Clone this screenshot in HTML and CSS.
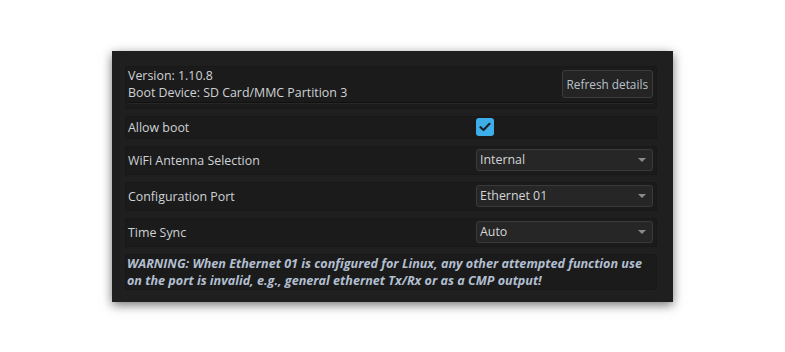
FILE: index.html
```html
<!DOCTYPE html>
<html lang="en">
<head>
    <meta charset="UTF-8">
    <meta name="viewport" content="width=device-width, initial-scale=1.0">
    <title>Device Settings</title>
    <link rel="stylesheet" href="styles.css">
</head>
<body>
    <div class="panel">
        <!-- Version / boot device -->
        <div class="row info-row">
            <div class="info-top">
                <div class="info-text">
                    <div>Version: 1.10.8</div>
                    <div>Boot Device: SD Card/MMC Partition 3</div>
                </div>
                <button class="button">Refresh details</button>
            </div>
            <div class="info-bar"></div>
        </div>

        <div class="row check-row">
            <span class="label">Allow boot</span>
            <span class="checkbox">
                <svg width="12" height="10" viewBox="0 0 12 10">
                    <path d="M1.5 5.2 L4.5 8 L10.5 1.8" fill="none" stroke="#1d2125" stroke-width="2.2" stroke-linecap="round" stroke-linejoin="round"/>
                </svg>
            </span>
        </div>

        <div class="row">
            <span class="label">WiFi Antenna Selection</span>
            <div class="select">Internal<span class="arrow"></span></div>
        </div>

        <div class="row">
            <span class="label">Configuration Port</span>
            <div class="select">Ethernet 01<span class="arrow"></span></div>
        </div>

        <div class="row">
            <span class="label">Time Sync</span>
            <div class="select">Auto<span class="arrow"></span></div>
        </div>

        <div class="row warning">
            WARNING: When Ethernet 01 is configured for Linux, any other attempted function use on the port is invalid, e.g., general ethernet Tx/Rx or as a CMP output!
        </div>
    </div>
</body>
</html>
```

FILE: styles.css
```css
body {
    margin: 0;
    min-height: 100vh;
    display: flex;
    align-items: center;
    justify-content: center;
    background-color: #ffffff;
    font-family: "Open Sans", "Noto Sans", sans-serif;
    font-size: 12.4px;
    color: #cfd2d6;
}
.panel {
    width: 561px;
    box-sizing: border-box;
    padding: 15px 16px 12px 13px;
    background-color: #1f1f1f;
    box-shadow: 0 3px 10px rgba(0,0,0,0.55);
    display: flex;
    flex-direction: column;
    gap: 7px;
}
.row {
    display: flex;
    align-items: center;
    justify-content: space-between;
    height: 29px;
    box-sizing: border-box;
    padding: 0 3px 0 2px;
    background-color: #1b1b1b;
    border: 1px solid #181818;
    border-radius: 2px;
}
.info-row {
    height: 43px;
    flex-direction: column;
    align-items: stretch;
    padding: 0 3px 4px 2px;
}
.info-top {
    display: flex;
    justify-content: space-between;
    align-items: center;
}
.info-text {
    line-height: 17px;
}
.info-bar {
    height: 1px;
    margin-top: 1px;
    background-color: #111111;
    border-bottom: 1px solid #272727;
}
.button {
    font-family: inherit;
    font-size: 11.8px;
    white-space: nowrap;
    color: #b9c2cb;
    background-color: #242424;
    border: 1px solid #3c3c3c;
    border-radius: 3px;
    padding: 0 4px;
    height: 28px;
}
.check-row {
    height: 23px;
    justify-content: flex-start;
}
.check-row .label {
    width: 348px;
}
.checkbox {
    width: 18px;
    height: 18px;
    border-radius: 3px;
    background-color: #3daee9;
    display: flex;
    align-items: center;
    justify-content: center;
}
.select {
    position: relative;
    width: 177px;
    height: 22px;
    box-sizing: border-box;
    padding-left: 3px;
    line-height: 20px;
    background-color: #262626;
    border: 1px solid #3a3a3a;
    border-radius: 3px;
    color: #d3d5d8;
}
.arrow {
    position: absolute;
    right: 6px;
    top: 8px;
    border-left: 4px solid transparent;
    border-right: 4px solid transparent;
    border-top: 4px solid #8a8a8a;
}
.warning {
    display: block;
    height: 36px;
    padding: 0 2px 0 1px;
    font-weight: bold;
    font-style: italic;
    font-size: 12.6px;
    line-height: 17px;
    color: #b2bfd0;
}
```
